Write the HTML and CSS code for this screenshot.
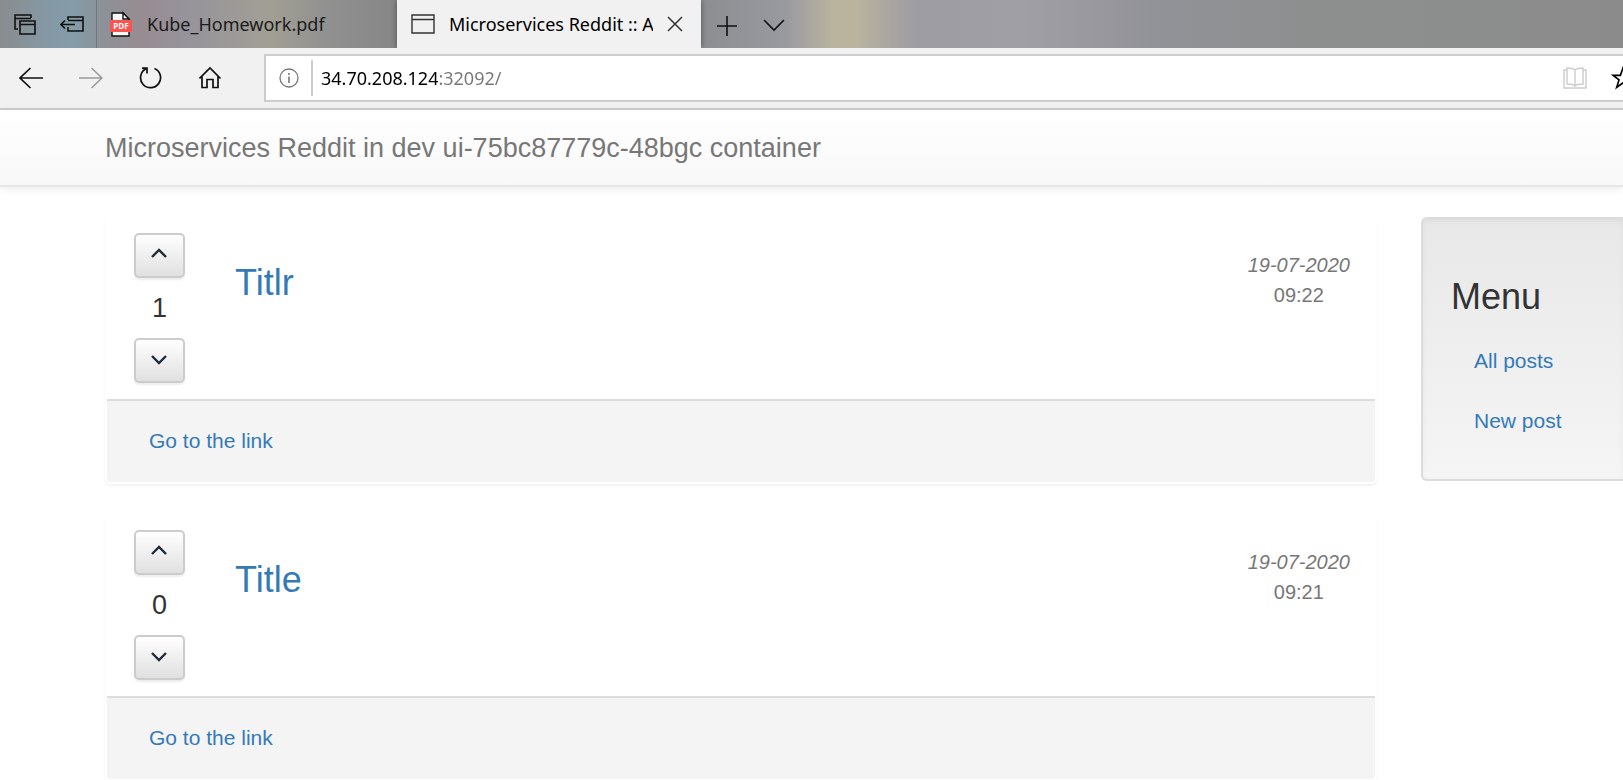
FILE: index.html
```
<!DOCTYPE html>
<html lang="en">
<head>
<meta charset="utf-8">
<title>Microservices Reddit :: All posts</title>
<link rel="stylesheet" href="styles.css">
</head>
<body>
<div class="browser">
  <div class="tab-strip">
    <div class="strip-tools">
      <button class="icon-button" type="button" aria-label="Tabs you've set aside">
        <svg width="24" height="24" viewBox="0 0 24 24" fill="none" stroke="#111" stroke-width="1.6"><path d="M5 17H2V3h16v3M2 6.500h16M7 9h15v13H7zM7 12.500h15"/></svg>
      </button>
      <button class="icon-button" type="button" aria-label="Set these tabs aside">
        <svg width="26" height="24" viewBox="0 0 26 24" fill="none" stroke="#111" stroke-width="1.6"><path d="M8 8V5h15v14H8v-4M8 8.500h15M1 12.500h14M5 8.500l-4 4 4 4"/></svg>
      </button>
    </div>
    <button class="tab" type="button">
      <svg class="pdf-icon" width="24" height="26" viewBox="0 0 24 26"><path d="M3 2h11l6 6v17H3z" fill="#f7f7f7" stroke="#111" stroke-width="1.400"/><path d="M14 2v6h6z" fill="#fff" stroke="#111" stroke-width="1.400"/><rect x="1" y="9" width="22" height="12" rx="1" fill="#fb5252"/><text x="12" y="18" text-anchor="middle" class="pdf-label">PDF</text></svg>
      <span class="tab-title">Kube_Homework.pdf</span>
    </button>
    <div class="tab tab-active">
      <svg width="24" height="22" viewBox="0 0 24 22" fill="none" stroke="#333" stroke-width="1.400"><path d="M1 2h22v18H1zM1 6.500h22"/></svg>
      <span class="tab-title">Microservices Reddit :: All posts</span>
      <button class="icon-button tab-close" type="button" aria-label="Close tab">
        <svg width="16" height="16" viewBox="0 0 16 16" fill="none" stroke="#333" stroke-width="1.500"><path d="M1 1l14 14M15 1L1 15"/></svg>
      </button>
    </div>
    <div class="strip-actions">
      <button class="icon-button" type="button" aria-label="New tab">
        <svg width="22" height="22" viewBox="0 0 22 22" fill="none" stroke="#111" stroke-width="1.600"><path d="M11 1v20M1 11h20"/></svg>
      </button>
      <button class="icon-button" type="button" aria-label="Tab previews">
        <svg width="22" height="22" viewBox="0 0 22 22" fill="none" stroke="#111" stroke-width="1.600"><path d="M1 5l10 10L21 5"/></svg>
      </button>
    </div>
  </div>
  <div class="toolbar">
    <div class="nav-buttons">
      <button class="icon-button" type="button" aria-label="Back">
        <svg width="24" height="24" viewBox="0 0 24 24" fill="none" stroke="#111" stroke-width="1.700"><path d="M24 12H1M11.500 2L1 12l10.500 10"/></svg>
      </button>
      <button class="icon-button" type="button" aria-label="Forward" disabled>
        <svg width="24" height="24" viewBox="0 0 24 24" fill="none" stroke="#999" stroke-width="1.500"><path d="M0 12h23M12.500 2L23 12 12.500 22"/></svg>
      </button>
      <button class="icon-button" type="button" aria-label="Refresh">
        <svg width="24" height="24" viewBox="0 0 24 24" fill="none" stroke="#111" stroke-width="1.700"><path d="M15.500 2.500A10 10 0 1 1 7 2.800M3 2.200h5v5.300"/></svg>
      </button>
      <button class="icon-button" type="button" aria-label="Home">
        <svg width="24" height="24" viewBox="0 0 24 24" fill="none" stroke="#111" stroke-width="1.700"><path d="M0.500 12.500L11 2l10.500 10.500M3 10.500V21.500h5v-8h6v8h5v-11"/></svg>
      </button>
    </div>
    <div class="address">
      <svg class="info-icon" width="20" height="20" viewBox="0 0 20 20" fill="none" stroke="#777"><circle cx="10" cy="10" r="9" stroke-width="1.300"/><path d="M10 8.500V15M10 5v2" stroke-width="1.600"/></svg>
      <input class="address-input" type="text" value="34.70.208.124:32092/" aria-label="Address">
      <button class="icon-button" type="button" aria-label="Reading view" disabled>
        <svg width="24" height="22" viewBox="0 0 24 22" fill="none" stroke="#ccc" stroke-width="1.400"><path d="M12 3C10 1 7 1 4 1v16c3 0 6 0 8 2 2-2 5-2 8-2V1c-3 0-6 0-8 2v16M4 3H1v18h22V3h-3"/></svg>
      </button>
      <button class="icon-button star-button" type="button" aria-label="Add to favorites">
        <svg width="24" height="24" viewBox="0 0 24 24" fill="none" stroke="#000" stroke-width="1.700"><path d="M12 2l2.600 7.300H22l-6 4.600 2.300 7.500-6.300-4.500-6.300 4.500L8 13.900 2 9.300h7.400z"/></svg>
      </button>
    </div>
  </div>
</div>
<header class="navbar"><span class="navbar-brand">Microservices Reddit in dev ui-75bc87779c-48bgc container</span></header>
<div class="content">
  <main class="posts">
    <article class="post">
      <div class="post-body">
        <div class="votes">
          <button class="vote" type="button" aria-label="Vote up"><svg width="18" height="12" viewBox="0 0 18 12"><path d="M1 9l7-7 7 7"/></svg></button>
          <span class="score">1</span>
          <button class="vote" type="button" aria-label="Vote down"><svg width="18" height="12" viewBox="0 0 18 12"><path d="M1 3l7 7 7-7"/></svg></button>
        </div>
        <h2 class="post-title"><a href="#titlr">Titlr</a></h2>
        <div class="post-date"><em>19-07-2020</em><span>09:22</span></div>
      </div>
      <footer class="post-footer"><a href="#link">Go to the link</a></footer>
    </article>
    <article class="post">
      <div class="post-body">
        <div class="votes">
          <button class="vote" type="button" aria-label="Vote up"><svg width="18" height="12" viewBox="0 0 18 12"><path d="M1 9l7-7 7 7"/></svg></button>
          <span class="score">0</span>
          <button class="vote" type="button" aria-label="Vote down"><svg width="18" height="12" viewBox="0 0 18 12"><path d="M1 3l7 7 7-7"/></svg></button>
        </div>
        <h2 class="post-title"><a href="#title">Title</a></h2>
        <div class="post-date"><em>19-07-2020</em><span>09:21</span></div>
      </div>
      <footer class="post-footer"><a href="#link">Go to the link</a></footer>
    </article>
  </main>
  <nav class="menu">
    <h2 class="menu-title">Menu</h2>
    <a class="menu-link" href="#all">All posts</a>
    <a class="menu-link" href="#new">New post</a>
  </nav>
</div>
</body>
</html>
```
FILE: styles.css
```
* { box-sizing: border-box; }
html { overflow: hidden; }
body {
  margin: 0;
  background: #fff;
  color: #333;
  font: 21px/30px "Liberation Sans", Arial, sans-serif;
}
a { color: #337ab7; text-decoration: none; }
svg { display: block; flex: none; }
h2 { margin: 0; font-weight: 400; }

/* Browser chrome */
.browser { font: 18px/28px "Noto Sans", sans-serif; color: #111; }
.icon-button {
  display: flex;
  padding: 0;
  border: 0;
  background: none;
}
.tab-strip {
  display: flex;
  height: 48px;
  background: linear-gradient(90deg, #8a8c8e 0, #8499a5 50px, #849ba8 75px, #8c9298 100px, #978c91 142px, #96939b 185px, #a19f94 270px, #909090 330px, #868686 397px, #8c8d90 701px, #999aa0 785px, #bab49f 835px, #bab49f 855px, #9d9ca2 915px, #a09fa5 1020px, #919297 1160px, #8d8f8f 1300px, #8b8b8b 100%);
}
.strip-tools {
  display: flex;
  align-items: center;
  gap: 23px;
  width: 97px;
  padding-left: 13px;
  border-right: 1px solid #707980;
}
.tab {
  display: flex;
  align-items: center;
  gap: 14px;
  width: 300px;
  padding: 0 18px 0 12px;
  border: 0;
  background: none;
  color: #1b1b1b;
  font: inherit;
  text-align: left;
}
.pdf-label { fill: #fff; font: 700 8px "Open Sans", sans-serif; }
.tab-title { flex: 1; overflow: hidden; white-space: nowrap; }
.tab-active {
  width: 304px;
  padding-left: 14px;
  background: #f1f1f1;
  color: #000;
  box-shadow: 0 0 6px #0006;
  clip-path: inset(0 -6px);
}
.strip-actions { display: flex; align-items: center; gap: 25px; padding: 4px 0 0 15px; }
.toolbar {
  display: flex;
  align-items: center;
  height: 62px;
  background: #f1f1f1;
  border-bottom: 2px solid #ccc;
}
.nav-buttons { display: flex; gap: 36px; width: 264px; padding-left: 19px; flex: none; }
.address {
  display: flex;
  align-items: center;
  flex: 1;
  min-width: 0;
  height: 48px;
  padding-left: 13px;
  border: 2px solid #ccc;
  border-right: 0;
  background: #fff;
  overflow: hidden;
}
.address-input {
  flex: 1;
  min-width: 0;
  height: 36px;
  margin-left: 12px;
  padding: 0 0 0 8px;
  border: 0;
  border-left: 2px solid #ccc;
  background: linear-gradient(90deg, #000 125px, #777 125px);
  background-clip: text;
  -webkit-text-fill-color: transparent;
  font: inherit;
}
.star-button { width: 12px; margin-left: 24px; overflow: hidden; }

/* Page */
.navbar {
  display: flex;
  align-items: center;
  height: 77px;
  padding-left: 105px;
  border-bottom: 2px solid #e7e7e7;
  background: linear-gradient(#fff, #f8f8f8);
  box-shadow: 0 2px 8px #00000013;
}
.navbar-brand { color: #777; font-size: 27px; }
.content {
  display: grid;
  grid-template-columns: minmax(0, 1fr) 202px;
  gap: 44px;
  align-items: start;
  padding: 30px 0 0 105px;
}
.posts { display: grid; gap: 30px; }
.post {
  border: 2px solid transparent;
  border-radius: 6px;
  box-shadow: 0 2px 3px #0000000d;
}
.post-body { display: flex; align-items: flex-start; height: 180px; padding: 14px 25px 0 27px; }
.votes { display: flex; flex-direction: column; align-items: center; width: 51px; }
.vote {
  display: flex;
  align-items: center;
  justify-content: center;
  width: 51px;
  height: 45px;
  padding: 0 0 4px;
  border: 2px solid #ccc;
  border-radius: 5px;
  background: linear-gradient(#fff, #e0e0e0);
  box-shadow: 0 2px 2px #00000013;
}
.vote path { fill: none; stroke: #222b38; stroke-width: 2.4; }
.score { font-size: 27px; line-height: 60px; }
.post-title { flex: 1; padding: 30px 0 0 50px; font-size: 36px; line-height: 40px; }
.post-date {
  display: flex;
  flex-direction: column;
  align-items: center;
  padding-top: 17px;
  color: #777;
  font-size: 20px;
}
.post-footer {
  padding: 25px 42px 26px;
  border-top: 2px solid #ddd;
  border-radius: 0 0 4px 4px;
  background: #f4f4f4;
}
.menu {
  display: flex;
  flex-direction: column;
  padding: 56px 0 28px 28px;
  border: 2px solid #dcdcdc;
  border-right: 0;
  border-radius: 6px 0 0 6px;
  background: linear-gradient(#e8e8e8, #f5f5f5);
  box-shadow: inset 0 2px 5px #0000000d;
}
.menu-title { margin-bottom: 12px; font-size: 36px; line-height: 44px; }
.menu-link { padding: 15px 23px; }
```
